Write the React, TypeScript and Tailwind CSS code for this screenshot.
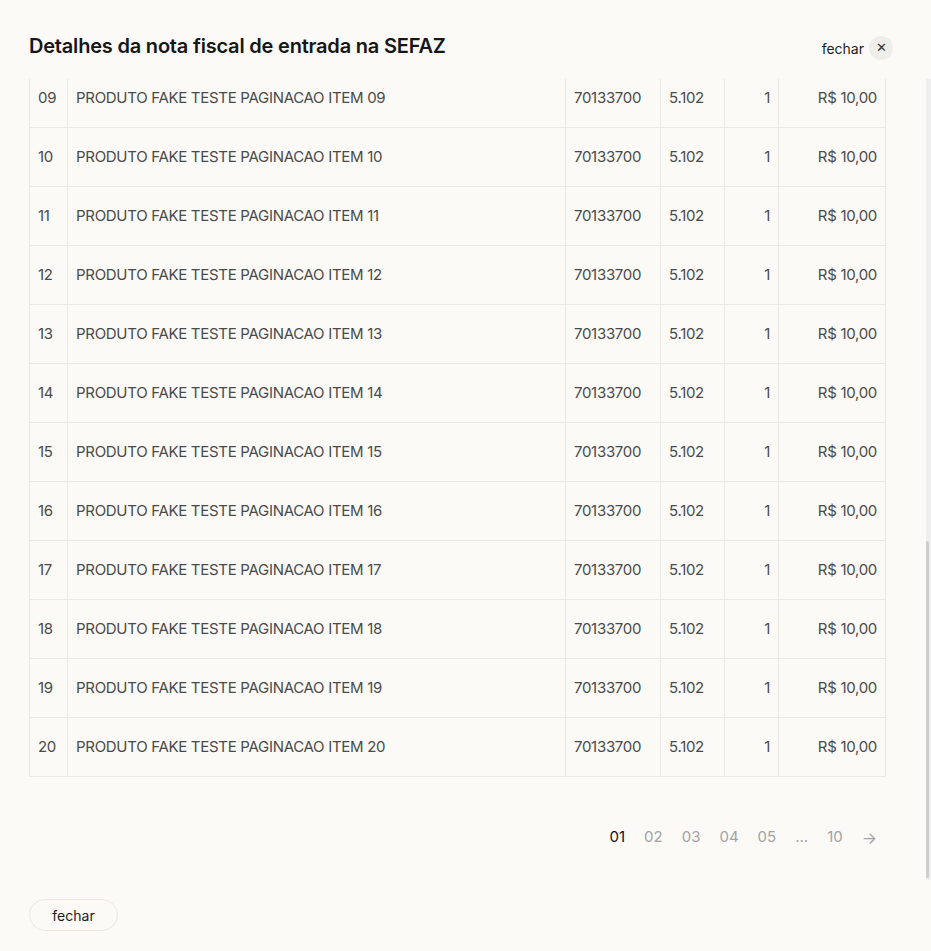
import React, { useEffect, useRef } from 'react';

interface Item {
  num: string;
  descricao: string;
  ncm: string;
  cfop: string;
  qtd: number;
  valor: string;
}

const items: Item[] = Array.from({ length: 20 }, (_, i) => {
  const n = String(i + 1).padStart(2, '0');
  return {
    num: n,
    descricao: `PRODUTO FAKE TESTE PAGINACAO ITEM ${n}`,
    ncm: '70133700',
    cfop: '5.102',
    qtd: 1,
    valor: 'R$ 10,00',
  };
});

const pages = ['01', '02', '03', '04', '05', '...', '10'];

const font = { fontFamily: 'Inter, "Noto Sans", sans-serif' };

const App: React.FC = () => {
  const scrollRef = useRef<HTMLDivElement>(null);

  useEffect(() => {
    const el = scrollRef.current;
    if (el) el.scrollTop = el.scrollHeight;
  }, []);

  return (
    <div
      className="relative w-[931px] h-[951px] overflow-hidden bg-[#fbfaf7] flex flex-col text-[#1c1c1c]"
      style={font}
    >
      <div className="h-[79px] shrink-0 flex items-center justify-between pl-[29px] pr-[38px] pt-[12px]">
        <h1 className="text-[20px] font-semibold tracking-[-0.2px] text-[#161616]">
          Detalhes da nota fiscal de entrada na SEFAZ
        </h1>
        <button className="mt-[5px] flex items-center gap-[5px] text-[14px] text-[#1c1c1c]">
          fechar
          <span className="w-[24px] h-[24px] rounded-full bg-[#efeee8] flex items-center justify-center text-[13px] text-[#333]">
            ✕
          </span>
        </button>
      </div>

      <div
        ref={scrollRef}
        className="h-[801px] shrink-0 overflow-y-auto [scrollbar-width:none]"
      >
        <div className="pl-[29px] pr-[45px] pt-[560px]">
          <table className="w-[857px] border-collapse text-[15px] text-[#4a4a4a] tracking-[-0.3px]">
            <thead>
              <tr className="h-[50px] text-left text-[13px] text-[#8a8a8a]">
                <th className="border border-[#e9e8e4] px-2 font-medium w-[38px]">#</th>
                <th className="border border-[#e9e8e4] px-2 font-medium w-[498px]">Descrição</th>
                <th className="border border-[#e9e8e4] px-2 font-medium w-[95px]">NCM</th>
                <th className="border border-[#e9e8e4] px-2 font-medium w-[64px]">CFOP</th>
                <th className="border border-[#e9e8e4] px-2 font-medium w-[54px] text-right">Qtd</th>
                <th className="border border-[#e9e8e4] px-2 font-medium text-right">Valor</th>
              </tr>
            </thead>
            <tbody>
              {items.map((item) => (
                <tr key={item.num} className="h-[59px]">
                  <td className="border border-[#e9e8e4] px-2">{item.num}</td>
                  <td className="border border-[#e9e8e4] px-2">{item.descricao}</td>
                  <td className="border border-[#e9e8e4] px-2">{item.ncm}</td>
                  <td className="border border-[#e9e8e4] px-2">{item.cfop}</td>
                  <td className="border border-[#e9e8e4] px-2 text-right">{item.qtd}</td>
                  <td className="border border-[#e9e8e4] px-2 text-right">{item.valor}</td>
                </tr>
              ))}
            </tbody>
          </table>

          <div className="w-[857px] h-[103px] flex items-center justify-end pr-[9px] gap-[19px] text-[15px] text-[#a3a3a3] pt-[18px]">
            {pages.map((p, i) => (
              <span key={p} className={i === 0 ? 'text-[#111]' : ''}>
                {p}
              </span>
            ))}
            <span className="text-[16px]">→</span>
          </div>
        </div>
      </div>

      {/* scrollbar of the body, scrolled to the end */}
      <div className="absolute left-[926px] top-[79px] w-[5px] h-[801px] bg-[#efefef]">
        <div className="absolute left-0 bottom-[2px] w-[3px] h-[337px] bg-[#cdcdcd] rounded-sm" />
      </div>

      <div className="flex-1 pl-[29px] pt-[19px]">
        <button className="w-[89px] h-[32px] rounded-full border border-[#ebe8de] text-[14px] text-[#1c1c1c]">
          fechar
        </button>
      </div>
    </div>
  );
};

export default App;
